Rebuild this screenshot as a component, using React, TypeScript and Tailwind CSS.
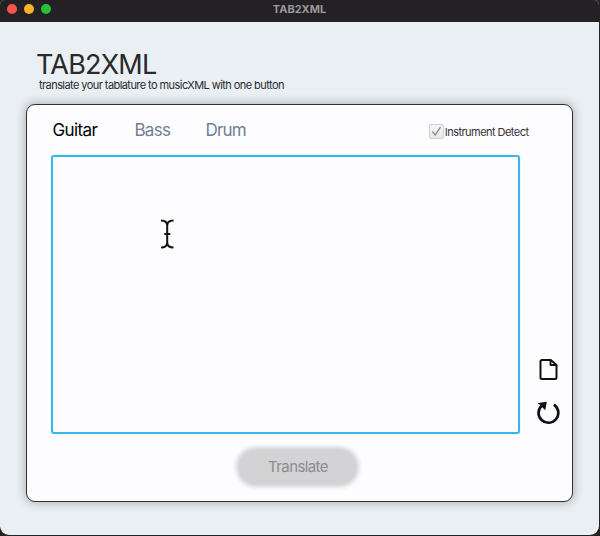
const tabs = [
  { label: "Guitar", className: "w-[82px] text-black tracking-[-0.6px]" },
  { label: "Bass", className: "w-[71px] text-[#708090] tracking-[-0.75px]" },
  { label: "Drum", className: "w-[60px] text-[#708090] tracking-[-0.8px]" },
];

function TitleBar() {
  return (
    <header className="relative flex h-[22px] shrink-0 items-center justify-center bg-[#232123]">
      <div className="absolute left-[7px] top-1 flex gap-[7px]">
        <span className="size-[10px] rounded-full bg-[#ff524c]" />
        <span className="size-[10px] rounded-full bg-[#fdb128]" />
        <span className="size-[10px] rounded-full bg-[#27c138]" />
      </div>
      <span className="-mt-[4px] text-[11px] font-bold leading-none text-[#9b999b]">TAB2XML</span>
    </header>
  );
}

function InstrumentDetect() {
  return (
    <label className="mt-[18px] mr-[43.5px] flex h-4 items-center gap-px whitespace-nowrap text-[11px] tracking-[-0.54px] text-[#333]">
      <span className="flex size-[15px] items-center justify-center rounded-[2px] border border-[#cfcfcf] bg-gradient-to-b from-[#f5f5f5] to-[#e9e9e9]">
        <svg width="11" height="11" viewBox="0 0 11 11" fill="none" stroke="#8d8d8d" strokeWidth="1.4">
          <path d="M1.3 5.4 4.2 9 9.5 1.2" />
        </svg>
      </span>
      <span className="pt-[3px]">Instrument Detect</span>
    </label>
  );
}

function TextCursor() {
  return (
    <svg className="absolute left-[107px] top-[62px]" width="15" height="30" viewBox="0 0 15 30" fill="none" stroke="#111" strokeWidth="2">
      <path d="M1 1.5C4.5 1.5 7.2 3 7.2 6.5V23.5C7.2 27 4.5 28.5 1 28.5M13.5 1.5C10 1.5 7.2 3 7.2 6.5M7.2 23.5C7.2 27 10 28.5 13.5 28.5M4.3 15H10.3" />
    </svg>
  );
}

export default function App() {
  return (
    <div className="h-[536px] w-[600px] overflow-hidden bg-[#242324] pr-px pb-px font-['Inter','Liberation_Sans',sans-serif]">
      <div className="flex h-[535px] flex-col overflow-hidden rounded-t-[5px] rounded-b-[9px] bg-[#eaeff3]">
        <TitleBar />
        <div className="h-[82px] shrink-0 pl-9 pt-[29px]">
          <h1 className="h-[28px] whitespace-nowrap text-[27px] leading-[27px] tracking-[-0.8px] text-[#292929]">TAB2XML</h1>
          <p className="ml-[3px] whitespace-nowrap text-[11px] leading-[13px] tracking-[-0.57px] text-[#252b30]">
            translate your tablature to musicXML with one button
          </p>
        </div>
        <main className="ml-[26px] flex h-[398px] w-[547px] shrink-0 flex-col rounded-[9px] border border-[#303030] bg-[#fdfcfe] shadow-[0_0_8px_2px_rgba(0,0,0,0.22)]">
          <div className="flex h-[50px] shrink-0 items-start justify-between pl-[25.5px]">
            <nav className="flex pt-[15px] text-[17px] leading-[21px]">
              {tabs.map((tab) => (
                <button key={tab.label} className={"text-left " + tab.className}>
                  {tab.label}
                </button>
              ))}
            </nav>
            <InstrumentDetect />
          </div>
          <div className="flex h-[279px] shrink-0 pl-6">
            <div className="relative w-[469px] shrink-0 rounded-[3px] border-2 border-[#37b7ec] shadow-[0_0_1px_#8bd5ef]">
              <TextCursor />
            </div>
            <aside className="flex w-[57px] flex-col items-center justify-end gap-[20px] pb-[9px] pl-[4px]">
              <svg width="20" height="23" viewBox="0 0 20 23" fill="none" stroke="#111" strokeWidth="2" strokeLinejoin="round">
                <path d="M4 2H12.8L18.5 7V19.5Q18.5 21 17 21H4Q2.5 21 2.5 19.5V3.5Q2.5 2 4 2Z" />
                <path d="M12.5 2V7H18.5" strokeWidth="1.8" />
              </svg>
              <svg width="24" height="24" viewBox="0 0 24 24">
                <path d="M17.9 3.6A9.9 9.9 0 1 1 5.9 4.4" fill="none" stroke="#111" strokeWidth="2.7" />
                <path d="M1.8 1.9 10.8 0.8 9.3 9.3Z" fill="#111" />
              </svg>
            </aside>
          </div>
          <div className="flex grow justify-center pt-4 pr-[4px]">
            <button className="h-[34px] w-[117px] rounded-full bg-[#d3d3d5] pl-px text-[15px] tracking-[-0.6px] text-[#8b8b8d] shadow-[0_0_4px_3px_#d3d3d5]">
              Translate
            </button>
          </div>
        </main>
      </div>
    </div>
  );
}
